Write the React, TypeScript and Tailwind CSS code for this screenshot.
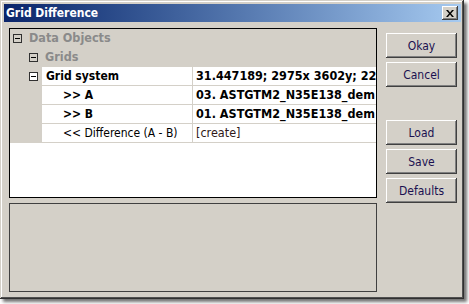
import React from 'react';

const font = { fontFamily: '"DejaVu Sans Condensed", "DejaVu Sans", sans-serif' };

const Toggle = ({ white }: { white?: boolean }) => (
    <span className={`relative inline-block w-[9px] h-[9px] border border-[#303030] shrink-0 ${white ? 'bg-white' : 'bg-[#d4d0c8]'}`}>
        <span className="absolute left-[1px] top-[3px] w-[5px] h-[1px] bg-black" />
    </span>
);

const Btn = ({ label }: { label: string }) => (
    <button className="w-[71px] h-[25px] bg-[#d4d0c8] text-[12px] text-[#1a1050] shadow-[inset_-1px_-1px_0_#404040,inset_1px_1px_0_#ffffff,inset_-2px_-2px_0_#808080] flex items-center justify-center">
        {label}
    </button>
);

const PropRow = ({ label, value, bold, indent }: { label: string; value: string; bold?: boolean; indent?: boolean }) => (
    <div className="flex h-[19px]">
        <div className="w-[32px] shrink-0 flex items-center pl-[19px]">
            {!indent && <Toggle white />}
        </div>
        <div className="flex flex-1 bg-white border-b border-[#d4d0c8] min-w-0">
            <div className={`w-[151px] shrink-0 border-r border-[#d4d0c8] flex items-center text-[12px] text-black ${indent ? 'pl-[21px]' : 'pl-[4px]'} ${bold ? 'font-bold' : 'text-[#141040] text-[12.5px]'}`}>
                {label}
            </div>
            <div className={`flex-1 min-w-0 flex items-center pl-[3px] whitespace-nowrap overflow-hidden ${bold ? 'font-bold text-black text-[12.5px]' : 'text-[#301818] text-[12.5px]'}`}>
                {value}
            </div>
        </div>
    </div>
);

export default function App() {
    return (
        <div className="w-[469px] h-[304px] bg-white" style={font}>
            <div className="w-[464px] h-[299px] bg-[#d4d0c8] pt-[4px] pl-[4px] pr-[3px] pb-[3px] flex flex-col shadow-[inset_-1px_-1px_0_#303030,inset_1px_1px_0_#d4d0c8,inset_-2px_-2px_0_#505050,inset_2px_2px_0_#ffffff,3px_3px_3px_rgba(0,0,0,0.55)]">
                {/* title bar */}
                <div className="h-[18px] flex items-center justify-between bg-gradient-to-r from-[#0a246a] to-[#a6caf0] pl-[2px] pr-[3px]">
                    <span className="text-white font-bold text-[12px] leading-none">Grid Difference</span>
                    <span className="w-[16px] h-[14px] bg-[#d4d0c8] shadow-[inset_-1px_-1px_0_#404040,inset_1px_1px_0_#ffffff,inset_-2px_-2px_0_#808080] flex items-center justify-center">
                        <svg width="8" height="7" viewBox="0 0 8 7">
                            <path d="M0 0h2l2 2.5L6 0h2L5 3.5 8 7H6L4 4.5 2 7H0l3-3.5z" fill="#000" />
                        </svg>
                    </span>
                </div>

                <div className="flex flex-1 pt-[6px] pl-[5px]">
                    <div className="flex flex-col w-[368px]">
                        {/* tree */}
                        <div className="h-[170px] border border-black bg-white overflow-hidden flex flex-col">
                            <div className="bg-[#d4d0c8]">
                                <div className="h-[19px] flex items-center gap-[7px] pl-[3px] text-[12.5px] font-bold text-[#8a8a8a]">
                                    <Toggle />
                                    <span>Data Objects</span>
                                </div>
                                <div className="h-[19px] flex items-center gap-[7px] pl-[19px] text-[12.5px] font-bold text-[#8a8a8a]">
                                    <Toggle />
                                    <span>Grids</span>
                                </div>
                                <PropRow label="Grid system" value="31.447189; 2975x 3602y; 220.3; 34.9" bold />
                                <PropRow label=">> A" value="03. ASTGTM2_N35E138_dem" bold indent />
                                <PropRow label=">> B" value="01. ASTGTM2_N35E138_dem" bold indent />
                                <PropRow label="<< Difference (A - B)" value="[create]" indent />
                            </div>
                        </div>
                        {/* info */}
                        <div className="mt-[5px] h-[89px] border border-[#404040] bg-[#d4d0c8]" />
                    </div>

                    <div className="flex flex-col pl-[9px] pt-[5px]">
                        <Btn label="Okay" />
                        <div className="mt-[4px]"><Btn label="Cancel" /></div>
                        <div className="mt-[33px]"><Btn label="Load" /></div>
                        <div className="mt-[4px]"><Btn label="Save" /></div>
                        <div className="mt-[4px]"><Btn label="Defaults" /></div>
                    </div>
                </div>
            </div>
        </div>
    );
}
